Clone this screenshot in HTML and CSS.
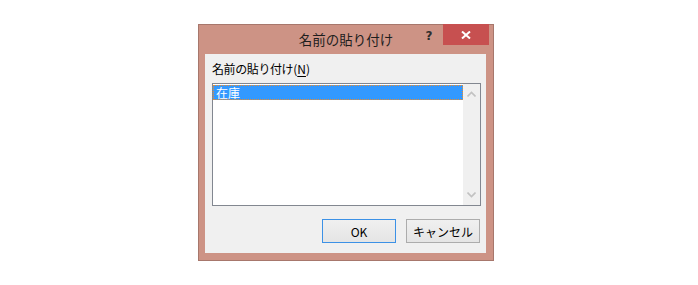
FILE: index.html
```html
<!DOCTYPE html>
<html>
    <head>
        <link rel="stylesheet" href="styles.css">
    </head>
    <body>
        <div class="stage">
            <div class="dialog">
                <div class="titlebar">
                    <span></span>
                    <span class="title">名前の貼り付け</span>
                    <div class="caption-buttons">
                        <span class="help">?</span>
                        <span class="close">
                            <svg width="10" height="8" viewBox="0 0 10 8">
                                <path d="M1 0.5 L9 7.5 M9 0.5 L1 7.5" stroke="#fff" stroke-width="2"/>
                            </svg>
                        </span>
                    </div>
                </div>

                <div class="panel">
                    <div class="label"><span class="kana">名前の貼り付け</span>(<u>N</u>)</div>

                    <div class="listbox">
                        <div class="items">
                            <div class="item selected">在庫</div>
                        </div>
                        <div class="scrollbar">
                            <svg width="9" height="6" viewBox="0 0 9 6">
                                <path d="M0.5 5.5 L4.5 1.5 L8.5 5.5" fill="none" stroke="#c2c2c2" stroke-width="1.6"/>
                            </svg>
                            <svg width="9" height="6" viewBox="0 0 9 6">
                                <path d="M0.5 0.5 L4.5 4.5 L8.5 0.5" fill="none" stroke="#c2c2c2" stroke-width="1.6"/>
                            </svg>
                        </div>
                    </div>

                    <div class="buttons">
                        <button class="btn default">OK</button>
                        <button class="btn">キャンセル</button>
                    </div>
                </div>
            </div>
        </div>
    </body>
</html>
```

FILE: styles.css
```css
body {
    margin: 0;
    background: #fff;
    font-family: "Noto Sans CJK JP", "Noto Sans", sans-serif;
}

.stage {
    padding: 24px 0 0 198px;
}

.dialog {
    width: 294px;
    background-color: #cd9385;
    border: 1px solid #a7776c;
}

.titlebar {
    display: grid;
    grid-template-columns: 1fr auto 1fr;
    height: 29px;
}

.title {
    font-size: 13.5px;
    line-height: 29px;
    color: #1e1e1e;
}

.caption-buttons {
    display: flex;
    justify-content: flex-end;
    align-items: flex-start;
}

.help {
    width: 28px;
    margin-top: 4px;
    text-align: center;
    font-family: "DejaVu Sans", sans-serif;
    font-weight: bold;
    font-size: 12px;
    line-height: 14px;
    color: #2e2e2e;
}

.close {
    display: flex;
    align-items: center;
    justify-content: center;
    width: 46px;
    height: 21px;
    margin-top: -1px;
    margin-right: 4px;
    background-color: #c75050;
}

.panel {
    margin: 0 7px 7px 6px;
    padding: 7px 5px 10px 7px;
    background-color: #f0f0f0;
}

.label {
    font-size: 12px;
    line-height: 16px;
    color: #000;
}

.label .kana {
    letter-spacing: -0.4px;
}

.label u {
    text-decoration-thickness: 1px;
    text-underline-offset: 2px;
}

.listbox {
    display: flex;
    height: 121px;
    margin-top: 6px;
    border: 1px solid #828790;
    background-color: #fff;
}

.items {
    flex: 1;
    padding-top: 1px;
}

.item {
    height: 13px;
    padding-left: 2px;
    font-size: 12px;
    line-height: 13px;
}

.item.selected {
    background-color: #3399ff;
    color: #fff;
    border: 1px dotted #f08c28;
}

.scrollbar {
    display: flex;
    flex-direction: column;
    justify-content: space-between;
    align-items: center;
    width: 17px;
    padding: 7px 0 7px;
    background-color: #f0f0f0;
}

.buttons {
    display: flex;
    justify-content: flex-end;
    gap: 10px;
    margin-top: 13px;
    margin-right: 1px;
}

.btn {
    width: 74px;
    height: 24px;
    padding: 0;
    font-family: "Noto Sans CJK JP", "Noto Sans", sans-serif;
    font-size: 12px;
    color: #000;
    background: linear-gradient(#f0f0f0, #e5e5e5);
    border: 1px solid #acacac;
}

.btn.default {
    border-color: #3c91e6;
}
```
